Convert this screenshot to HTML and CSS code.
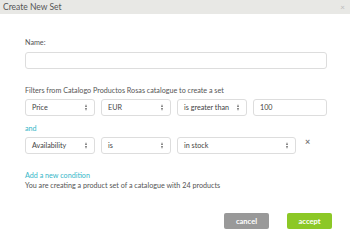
FILE: index.html
```html
<!DOCTYPE html>
<html lang="en">
<head>
    <meta charset="UTF-8">
    <title>Create New Set</title>
    <link rel="stylesheet" href="styles.css">
</head>
<body>
    <div class="modal">
        <div class="modal-header">
            <h1>Create New Set</h1>
            <span class="close">&#215;</span>
        </div>

        <div class="modal-body">
            <div class="field">
                <label>Name:</label>
                <input type="text" class="text-input">
            </div>

            <p class="filters-title">Filters from Catalogo Productos Rosas catalogue to create a set</p>

            <div class="condition">
                <div class="select w-small">Price <span class="arrows"></span></div>
                <div class="select w-small">EUR <span class="arrows"></span></div>
                <div class="select w-small">is greater than <span class="arrows"></span></div>
                <div class="text-box">100</div>
            </div>

            <a class="link and">and</a>

            <div class="condition">
                <div class="select w-small">Availability <span class="arrows"></span></div>
                <div class="select w-small">is <span class="arrows"></span></div>
                <div class="select w-large">in stock <span class="arrows"></span></div>
                <span class="remove">&#215;</span>
            </div>

            <a class="link add">Add a new condition</a>
            <p class="summary">You are creating a product set of a catalogue with 24 products</p>
        </div>

        <div class="modal-footer">
            <button class="btn btn-cancel">cancel</button>
            <button class="btn btn-accept">accept</button>
        </div>
    </div>
</body>
</html>
```

FILE: styles.css
```css
* {
    margin: 0;
    padding: 0;
    box-sizing: border-box;
    font-family: Lato, "Open Sans", Arial, sans-serif;
}

body {
    background-color: white;
    color: #555;
    font-size: 7.2px;
}

.modal {
    width: 350px;
    height: 249px;
    background-color: white;
}

.modal-header {
    height: 14px;
    background-color: #e8e8e5;
    display: flex;
    justify-content: space-between;
    align-items: center;
    padding: 0 5px 0 3px;
}

.modal-header h1 {
    font-size: 8.5px;
    font-weight: normal;
    color: #555;
}

.close {
    color: #bbb;
    font-size: 8px;
}

.modal-body {
    padding: 24px 23px 0 25px;
}

.field label {
    display: block;
    margin-bottom: 5px;
    line-height: 9px;
}

.text-input {
    display: block;
    width: 100%;
    height: 17px;
    border: 1px solid #ddd;
    border-radius: 3px;
}

.filters-title {
    margin-top: 17px;
    line-height: 9px;
}

.condition {
    display: flex;
    align-items: center;
    gap: 6px;
    margin-top: 4px;
}

.select,
.text-box {
    height: 17px;
    border: 1px solid #ddd;
    border-radius: 3px;
    padding: 0 6px;
    display: flex;
    align-items: center;
    color: #444;
    background-color: white;
}

.select {
    justify-content: space-between;
}

.w-small {
    width: 70px;
}

.w-large {
    width: 119px;
}

.text-box {
    flex: 1;
}

.arrows {
    width: 3px;
    height: 7px;
    position: relative;
}

.arrows::before,
.arrows::after {
    content: "";
    position: absolute;
    left: 0;
    border-left: 1.5px solid transparent;
    border-right: 1.5px solid transparent;
}

.arrows::before {
    top: 0;
    border-bottom: 3px solid #777;
}

.arrows::after {
    bottom: 0;
    border-top: 3px solid #777;
}

.remove {
    color: #777;
    font-size: 9px;
    font-weight: bold;
    margin-left: 3px;
    align-self: flex-start;
    margin-top: -1px;
}

.link {
    display: block;
    color: #35b6c8;
    line-height: 9px;
}

.and {
    margin-top: 8px;
}

.add {
    margin-top: 17px;
}

.summary {
    line-height: 9px;
    margin-top: 1px;
}

.modal-footer {
    display: flex;
    justify-content: flex-end;
    gap: 18px;
    padding: 23px 18px 0 0;
}

.btn {
    height: 16px;
    border: none;
    border-radius: 2px;
    color: white;
    font-size: 7.5px;
    font-weight: bold;
}

.btn-cancel {
    width: 45px;
    background-color: #999;
}

.btn-accept {
    width: 45px;
    background-color: #8cc826;
}
```
